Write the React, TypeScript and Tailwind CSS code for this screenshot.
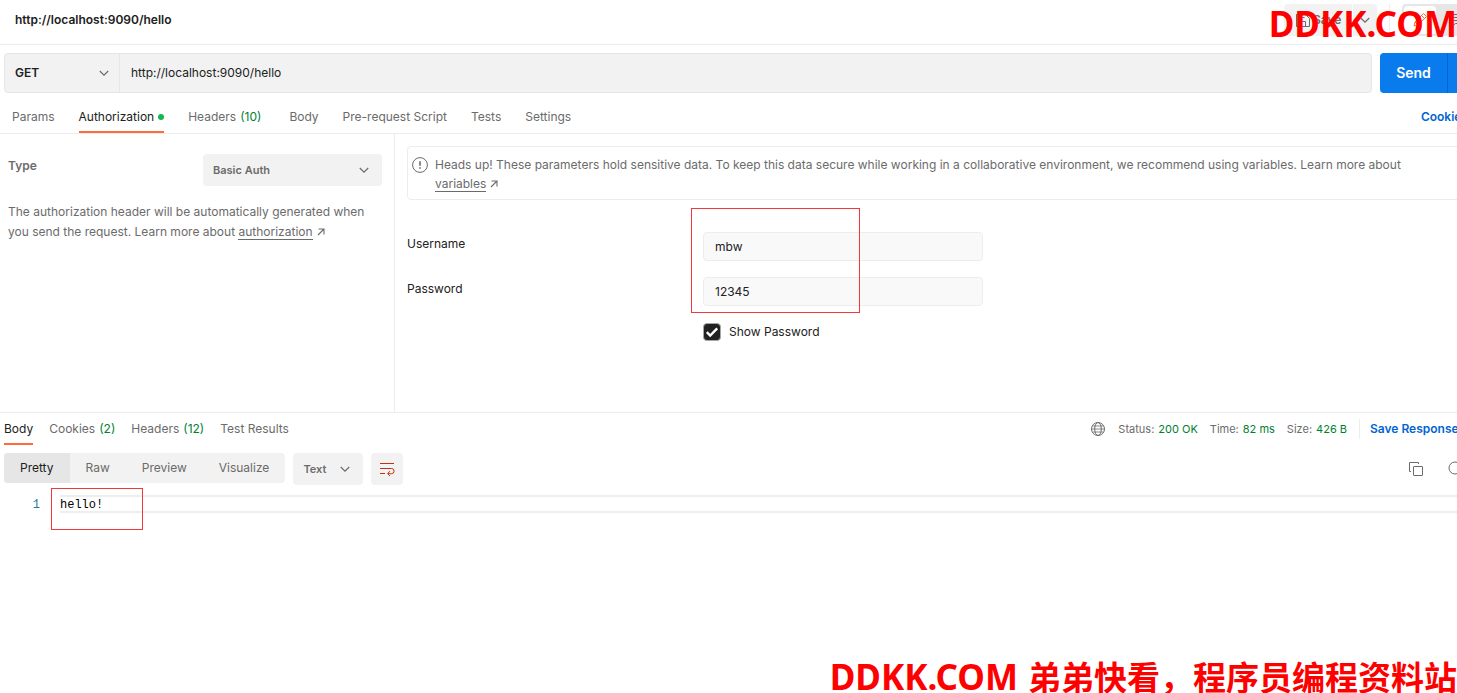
import React, { useState } from "react";

interface TabItem {
  label: string;
  count?: number;
  dot?: boolean;
}

interface TabsProps {
  items: TabItem[];
  active: string;
  onChange: (label: string) => void;
  className: string;
}

const requestTabs: TabItem[] = [
  { label: "Params" },
  { label: "Authorization", dot: true },
  { label: "Headers", count: 10 },
  { label: "Body" },
  { label: "Pre-request Script" },
  { label: "Tests" },
  { label: "Settings" },
];

const responseTabs: TabItem[] = [
  { label: "Body" },
  { label: "Cookies", count: 2 },
  { label: "Headers", count: 12 },
  { label: "Test Results" },
];

const views = ["Pretty", "Raw", "Preview", "Visualize"];

const stats = [
  { name: "Status:", value: "200 OK" },
  { name: "Time:", value: "82 ms" },
  { name: "Size:", value: "426 B" },
];

const Chevron = ({ className = "" }: { className?: string }) => (
  <svg
    className={`pointer-events-none h-4 w-4 shrink-0 ${className}`}
    viewBox="0 0 16 16"
    fill="none"
    stroke="currentColor"
    strokeWidth="1.2"
  >
    <path d="M3.8 6l4.2 4.2L12.2 6" />
  </svg>
);

const ArrowOut = () => (
  <svg
    className="ml-1 inline-block h-2 w-2 align-baseline"
    viewBox="0 0 8 8"
    fill="none"
    stroke="currentColor"
    strokeWidth="1.1"
  >
    <path d="M1.5 1h5.5v5.5M7 1L1 7" />
  </svg>
);

const Tabs: React.FC<TabsProps> = ({ items, active, onChange, className }) => (
  <nav className={`flex ${className}`}>
    {items.map((item) => (
      <button
        key={item.label}
        type="button"
        onClick={() => onChange(item.label)}
        className={`flex items-center gap-1 border-b-2 pt-0.5 whitespace-nowrap ${
          item.label === active
            ? "border-[#ff6c37] text-[#212121]"
            : "border-transparent"
        }`}
      >
        {item.label}
        {item.count && <span className="text-[#007f31]">({item.count})</span>}
        {item.dot && <span className="h-1.5 w-1.5 rounded-full bg-[#0cbb52]" />}
      </button>
    ))}
  </nav>
);

const TopBar = () => (
  <header className="flex h-[45px] items-start justify-between border-b border-[#ededed] pt-1 pl-[15px]">
    <h1 className="font-semibold leading-8 text-[#212121]">
      http://localhost:9090/hello
    </h1>
    <div className="flex h-8 items-center">
      <button
        type="button"
        className="mr-px flex h-8 w-[68px] items-center gap-0.5 rounded-l bg-[#f2f2f2] pl-[11px] font-semibold"
      >
        <svg className="h-4 w-4" viewBox="0 0 16 16" fill="none" stroke="currentColor">
          <path d="M1.5 2.5h9l4 4v8h-13zM5.5 14.5v-5h5v5M4.5 2.5v3h5" />
        </svg>
        Save
      </button>
      <button
        type="button"
        aria-label="Save options"
        className="flex h-8 w-6 items-center justify-center rounded-r bg-[#f2f2f2]"
      >
        <Chevron />
      </button>
      <div className="mx-3 h-8 w-px bg-[#ededed]" />
      <div className="flex h-8 w-[79px] items-center rounded bg-[#e6e6e6] px-0.5">
        <button
          type="button"
          aria-label="Edit"
          className="flex h-7 w-8 items-center justify-center rounded bg-white text-[#ff6c37]"
        >
          <svg className="h-4 w-4" viewBox="0 0 16 16" fill="none" stroke="currentColor">
            <path d="M2 14l1-4 8.5-8.5 3 3L6 13zM9.5 3.5l3 3M3 10l3 3" />
          </svg>
        </button>
        <button
          type="button"
          aria-label="Comments"
          className="flex h-7 w-10 items-center justify-center"
        >
          <svg className="h-4 w-4" viewBox="0 0 16 16" fill="none" stroke="currentColor">
            <path d="M1.5 2.5h13v9h-7l-3 2.5v-2.5h-3zM4 5.5h8M4 8.5h5" />
          </svg>
        </button>
      </div>
    </div>
  </header>
);

const RequestBar = () => (
  <form
    className="mt-2 flex h-10 gap-2 pl-1"
    onSubmit={(e) => e.preventDefault()}
  >
    <div className="flex grow rounded border border-[#e6e6e6] bg-[#f2f2f2]">
      <div className="relative w-[115px] border-r border-[#e6e6e6]">
        <select
          aria-label="Method"
          className="h-full w-full appearance-none pl-2.5 font-semibold text-[#212121]"
        >
          <option>GET</option>
          <option>POST</option>
        </select>
        <Chevron className="absolute top-[11px] right-[7px]" />
      </div>
      <input
        aria-label="Request URL"
        className="grow px-[11px] text-[#212121] outline-none"
        defaultValue="http://localhost:9090/hello"
      />
    </div>
    <div className="flex w-[101px] rounded bg-[#097bed] text-white">
      <button
        type="submit"
        className="w-[68px] border-r border-[#0265d2] text-sm font-semibold"
      >
        Send
      </button>
      <button
        type="button"
        aria-label="Send options"
        className="flex grow items-center justify-center"
      >
        <Chevron />
      </button>
    </div>
  </form>
);

const AuthPanel = () => {
  const [showPassword, setShowPassword] = useState(true);

  return (
    <section className="flex h-[279px] border-b border-[#ededed]">
      <div className="w-[395px] shrink-0 border-r border-[#ededed] pt-5 pr-3 pl-2">
        <div className="flex items-start justify-between">
          <label htmlFor="auth-type" className="font-semibold leading-6">
            Type
          </label>
          <div className="relative w-[179px]">
            <select
              id="auth-type"
              className="h-8 w-full appearance-none rounded bg-[#f2f2f2] pl-2.5 text-[11px] font-semibold"
            >
              <option>Basic Auth</option>
              <option>Bearer Token</option>
            </select>
            <Chevron className="absolute top-2 right-2.5" />
          </div>
        </div>
        <p className="mt-4 leading-5">
          The authorization header will be automatically generated when you send
          the request. Learn more about{" "}
          <a href="#authorization" className="border-b border-[#6b6b6b]">
            authorization
          </a>
          <ArrowOut />
        </p>
      </div>

      <div className="grow pt-3 pl-3">
        <div className="flex gap-[7px] rounded border border-[#ededed] pt-2 pr-14 pb-1.5 pl-1">
          <svg
            className="mt-0.5 h-4 w-4 shrink-0"
            viewBox="0 0 16 16"
            fill="none"
            stroke="currentColor"
          >
            <circle cx="8" cy="8" r="7.4" />
            <path strokeWidth="1.6" d="M8 4.2v4.6M8 10.2v1.6" />
          </svg>
          <p className="leading-[19px]">
            Heads up! These parameters hold sensitive data. To keep this data
            secure while working in a collaborative environment, we recommend
            using variables. Learn more about{" "}
            <a href="#variables" className="border-b border-[#6b6b6b]">
              variables
            </a>
            <ArrowOut />
          </p>
        </div>

        <div className="relative mt-8 grid grid-cols-[296px_280px] gap-y-4 text-[#212121]">
          <label htmlFor="username" className="leading-6">
            Username
          </label>
          <input
            id="username"
            defaultValue="mbw"
            className="h-[29px] rounded border border-[#ededed] bg-[#f9f9f9] px-[11px] outline-none"
          />
          <label htmlFor="password" className="leading-6">
            Password
          </label>
          <input
            id="password"
            type={showPassword ? "text" : "password"}
            defaultValue="12345"
            className="h-[29px] rounded border border-[#ededed] bg-[#f9f9f9] px-[11px] outline-none"
          />
          <label className="col-start-2 flex items-center gap-2 leading-5">
            <span className="relative h-[18px] w-[18px]">
              <input
                type="checkbox"
                checked={showPassword}
                onChange={(e) => setShowPassword(e.target.checked)}
                className="block h-full w-full appearance-none rounded border border-[#a6a6a6] checked:bg-[#212121]"
              />
              <svg
                className="pointer-events-none absolute inset-0"
                viewBox="0 0 18 18"
                fill="none"
                stroke="white"
                strokeWidth="2.4"
              >
                <path d="M3.8 9.2l3.4 3.4 7-7.2" />
              </svg>
            </span>
            Show Password
          </label>
          <div className="pointer-events-none absolute -top-6 left-[284px] h-[105px] w-[169px] border border-[#f03a3a]" />
        </div>
      </div>
    </section>
  );
};

const ResponsePanel = () => {
  const [tab, setTab] = useState("Body");
  const [view, setView] = useState("Pretty");

  return (
    <section>
      <div className="flex items-center justify-between pl-1">
        <Tabs
          items={responseTabs}
          active={tab}
          onChange={setTab}
          className="h-8 gap-4"
        />
        <div className="flex h-8 items-center">
          <svg
            className="mr-3 h-4 w-4"
            viewBox="0 0 16 16"
            fill="none"
            stroke="currentColor"
          >
            <circle cx="8" cy="8" r="6.5" />
            <ellipse cx="8" cy="8" rx="3.3" ry="6.5" />
            <path d="M2.5 5h11M2.5 11h11M1.5 8h13" strokeWidth=".8" />
          </svg>
          <dl className="flex gap-3 text-[11px]">
            {stats.map((stat) => (
              <div key={stat.name} className="flex gap-1">
                <dt>{stat.name}</dt>
                <dd className="text-[#007f31]">{stat.value}</dd>
              </div>
            ))}
          </dl>
          <div className="mr-2.5 ml-3 h-5 w-px bg-[#ededed]" />
          <button
            type="button"
            className="flex w-[111px] items-center gap-1 font-semibold whitespace-nowrap text-[#0265d2]"
          >
            Save Response
            <Chevron />
          </button>
        </div>
      </div>

      <div className="mt-2 flex h-8 items-start gap-2 pl-1">
        <div className="flex h-[30px] overflow-hidden rounded bg-[#f2f2f2]">
          {views.map((name) => (
            <button
              key={name}
              type="button"
              onClick={() => setView(name)}
              className={`px-4 ${
                name === view ? "bg-[#e6e6e6] text-[#212121]" : ""
              }`}
            >
              {name}
            </button>
          ))}
        </div>
        <div className="relative">
          <select
            aria-label="Format"
            className="h-8 w-[70px] appearance-none rounded bg-[#f2f2f2] pl-2.5 text-[11px] font-semibold"
          >
            <option>Text</option>
            <option>JSON</option>
          </select>
          <Chevron className="absolute top-2 right-2.5" />
        </div>
        <button
          type="button"
          aria-label="Wrap lines"
          className="flex h-8 w-8 items-center justify-center rounded bg-[#f2f2f2] text-[#c4320a]"
        >
          <svg className="h-4 w-4" viewBox="0 0 16 16" fill="none" stroke="currentColor">
            <path d="M1 2.5h14M1 7.5h11.5a2.6 2.6 0 0 1 0 5.2H9M1 12.5h5M11 10.2l-2.5 2.4 2.5 2.4" />
          </svg>
        </button>
        <div className="ml-auto flex h-8 items-center gap-6 pr-[17px]">
          <button type="button" aria-label="Copy">
            <svg className="h-4 w-4" viewBox="0 0 16 16" fill="none" stroke="currentColor">
              <path d="M10.5 3v-1.5h-9v9h1.5" />
              <rect x="5.5" y="5.5" width="9" height="9" rx=".5" />
            </svg>
          </button>
          <button type="button" aria-label="Search">
            <svg className="h-4 w-4" viewBox="0 0 16 16" fill="none" stroke="currentColor">
              <circle cx="7" cy="7" r="6" />
              <path d="M11.5 11.5l4 4" />
            </svg>
          </button>
        </div>
      </div>

      <div className="relative mt-2.5 flex font-['Liberation_Mono',monospace]">
        <span className="w-[60px] pr-5 text-right leading-5 text-[#237893]">
          1
        </span>
        <pre className="h-[18px] grow border-y-2 border-[#eeeeee] font-['Liberation_Mono',monospace] leading-4 text-black">
          hello!
        </pre>
        <div className="pointer-events-none absolute -top-[7px] left-[51px] h-[42px] w-[92px] border border-[#f03a3a]" />
      </div>
    </section>
  );
};

const App: React.FC = () => {
  const [tab, setTab] = useState("Authorization");

  return (
    <div className="relative h-screen overflow-hidden bg-white font-['Inter',sans-serif] text-xs text-[#6b6b6b]">
      {/* the workspace runs a little past the right edge */}
      <main className="-mr-6">
        <TopBar />
        <RequestBar />
        <div className="flex h-[41px] items-end justify-between border-b border-[#ededed] pr-[13px] pl-3">
          <Tabs
            items={requestTabs}
            active={tab}
            onChange={setTab}
            className="h-8 gap-6 [&>:nth-child(3)]:pr-1"
          />
          <a href="#cookies" className="font-semibold leading-8 text-[#0265d2]">
            Cookies
          </a>
        </div>
        <AuthPanel />
        <ResponsePanel />
      </main>

      <p className="pointer-events-none absolute top-0 right-0 font-['Noto_Sans',sans-serif] text-[35px] leading-[48px] font-bold text-[#ff0000]">
        DDKK.COM
      </p>
      <p className="pointer-events-none absolute right-0 bottom-0 font-['Noto_Sans_CJK_SC',sans-serif] text-[33px] leading-8 font-bold whitespace-nowrap text-[#ff0000]">
        <span className="mr-2.5 font-['Noto_Sans',sans-serif] text-[35px]">
          DDKK.COM
        </span>
        弟弟快看，程序员编程资料站
      </p>
    </div>
  );
};

export default App;
